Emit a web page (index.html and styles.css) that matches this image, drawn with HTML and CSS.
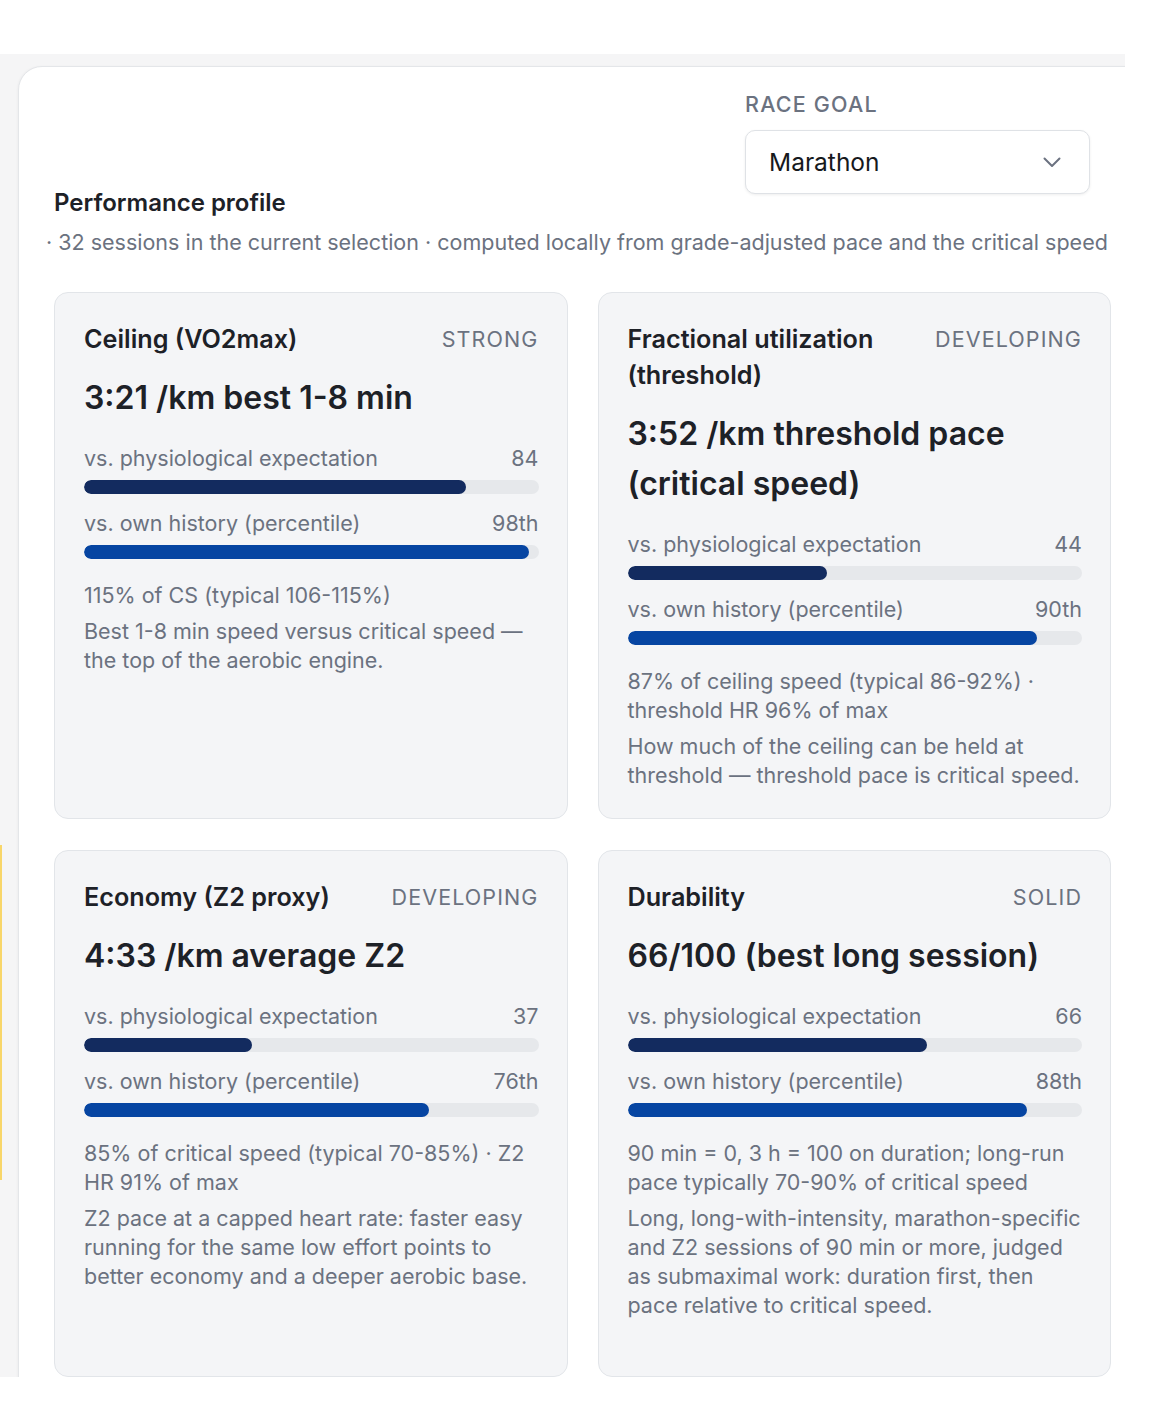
FILE: index.html
```html
<!DOCTYPE html>
<html lang="en">
<head>
<meta charset="utf-8">
<title>Performance profile</title>
<link rel="stylesheet" href="styles.css">
</head>
<body>
<div class="frame">
  <span class="edge-marker"></span>
  <section class="panel">
    <header class="head">
      <h2 class="title">Performance profile</h2>
      <div class="goal">
        <div class="goal-label">RACE GOAL</div>
        <div class="select">
          <span>Marathon</span>
          <svg class="chev" width="18" height="11" viewBox="0 0 18 11"><path d="M1.5 1.5 L9 9 L16.5 1.5" fill="none" stroke="#6b7280" stroke-width="2" stroke-linecap="round" stroke-linejoin="round"/></svg>
        </div>
      </div>
    </header>
    <p class="sub">· 32 sessions in the current selection · computed locally from grade-adjusted pace and the critical speed</p>

    <div class="grid">
      <article class="card">
        <div class="card-head">
          <h3 class="card-title">Ceiling (VO2max)</h3>
          <span class="badge">STRONG</span>
        </div>
        <div class="value">3:21 /km best 1-8 min</div>
        <div class="metrics">
          <div class="metric">
            <div class="metric-row"><span>vs. physiological expectation</span><span>84</span></div>
            <div class="track"><div class="fill fill-dark" style="width:84%"></div></div>
          </div>
          <div class="metric">
            <div class="metric-row"><span>vs. own history (percentile)</span><span>98th</span></div>
            <div class="track"><div class="fill fill-blue" style="width:98%"></div></div>
          </div>
        </div>
        <div class="notes">
          <p>115% of CS (typical 106-115%)</p>
          <p>Best 1-8 min speed versus critical speed — the top of the aerobic engine.</p>
        </div>
      </article>

      <article class="card">
        <div class="card-head">
          <h3 class="card-title">Fractional utilization (threshold)</h3>
          <span class="badge">DEVELOPING</span>
        </div>
        <div class="value">3:52 /km threshold pace (critical speed)</div>
        <div class="metrics">
          <div class="metric">
            <div class="metric-row"><span>vs. physiological expectation</span><span>44</span></div>
            <div class="track"><div class="fill fill-dark" style="width:44%"></div></div>
          </div>
          <div class="metric">
            <div class="metric-row"><span>vs. own history (percentile)</span><span>90th</span></div>
            <div class="track"><div class="fill fill-blue" style="width:90%"></div></div>
          </div>
        </div>
        <div class="notes">
          <p>87% of ceiling speed (typical 86-92%) · threshold HR 96% of max</p>
          <p>How much of the ceiling can be held at threshold — threshold pace is critical speed.</p>
        </div>
      </article>

      <article class="card">
        <div class="card-head">
          <h3 class="card-title">Economy (Z2 proxy)</h3>
          <span class="badge">DEVELOPING</span>
        </div>
        <div class="value">4:33 /km average Z2</div>
        <div class="metrics">
          <div class="metric">
            <div class="metric-row"><span>vs. physiological expectation</span><span>37</span></div>
            <div class="track"><div class="fill fill-dark" style="width:37%"></div></div>
          </div>
          <div class="metric">
            <div class="metric-row"><span>vs. own history (percentile)</span><span>76th</span></div>
            <div class="track"><div class="fill fill-blue" style="width:76%"></div></div>
          </div>
        </div>
        <div class="notes">
          <p>85% of critical speed (typical 70-85%) · Z2 HR 91% of max</p>
          <p>Z2 pace at a capped heart rate: faster easy running for the same low effort points to better economy and a deeper aerobic base.</p>
        </div>
      </article>

      <article class="card">
        <div class="card-head">
          <h3 class="card-title">Durability</h3>
          <span class="badge">SOLID</span>
        </div>
        <div class="value">66/100 (best long session)</div>
        <div class="metrics">
          <div class="metric">
            <div class="metric-row"><span>vs. physiological expectation</span><span>66</span></div>
            <div class="track"><div class="fill fill-dark" style="width:66%"></div></div>
          </div>
          <div class="metric">
            <div class="metric-row"><span>vs. own history (percentile)</span><span>88th</span></div>
            <div class="track"><div class="fill fill-blue" style="width:88%"></div></div>
          </div>
        </div>
        <div class="notes">
          <p>90 min = 0, 3 h = 100 on duration; long-run pace typically 70-90% of critical speed</p>
          <p>Long, long-with-intensity, marathon-specific and Z2 sessions of 90 min or more, judged as submaximal work: duration first, then pace relative to critical speed.</p>
        </div>
      </article>
    </div>
  </section>
</div>
</body>
</html>
```

FILE: styles.css
```css
* { box-sizing: border-box; }

html, body {
  margin: 0;
  padding: 0;
  background: #ffffff;
}

body {
  font-family: Inter, "Noto Sans", "Liberation Sans", sans-serif;
  color: #1d2127;
  font-size: 21.5px;
  line-height: 29px;
}

.frame {
  position: relative;
  margin-top: 54px;
  width: 1125px;
  height: 1323px;
  background: #f5f5f6;
  padding: 12px 0 0 18px;
  overflow: hidden;
}

.edge-marker {
  position: absolute;
  left: 0;
  top: 791px;
  width: 2px;
  height: 335px;
  background: #f8d66a;
}

.panel {
  width: 1129px;
  height: 1400px;
  background: #ffffff;
  border: 1px solid #e4e6e9;
  border-top-left-radius: 24px;
  padding: 23px 35px 0 35px;
  box-shadow: -1px 0 2px rgba(0, 0, 0, 0.03);
}

.head {
  display: flex;
  justify-content: space-between;
  align-items: flex-end;
}

.title {
  margin: 0;
  font-size: 24px;
  line-height: 36px;
  font-weight: 600;
  color: #1d2127;
}

.goal {
  display: flex;
  flex-direction: column;
  gap: 11px;
  margin-right: 21px;
  margin-bottom: 27px;
}

.goal-label {
  font-size: 21.5px;
  line-height: 29px;
  font-weight: 500;
  letter-spacing: 1.2px;
  color: #6b7280;
}

.select {
  width: 345px;
  height: 64px;
  border: 1px solid #dfe2e6;
  border-radius: 10px;
  background: #ffffff;
  box-shadow: 0 1px 3px rgba(0, 0, 0, 0.07);
  display: flex;
  align-items: center;
  justify-content: space-between;
  padding: 0 28px 0 23px;
  font-size: 24.5px;
  color: #16191d;
}

.chev { display: block; }

.sub {
  margin: 7px 0 0 -8px;
  font-size: 21.5px;
  line-height: 29px;
  color: #6b7280;
  white-space: nowrap;
}

.grid {
  margin-top: 35px;
  width: 1057px;
  display: grid;
  grid-template-columns: 1fr 1fr;
  grid-auto-rows: 1fr;
  column-gap: 30px;
  row-gap: 31px;
}

.card {
  background: #f4f5f7;
  border: 1px solid #e2e5e9;
  border-radius: 14px;
  padding: 28px 28px 28px 29px;
}

.card-head {
  display: flex;
  justify-content: space-between;
  align-items: flex-start;
  gap: 24px;
}

.card-title {
  margin: 0;
  font-size: 25.2px;
  line-height: 36px;
  font-weight: 600;
  color: #1d2127;
}

.badge {
  font-size: 21.5px;
  line-height: 36px;
  letter-spacing: 1.1px;
  color: #6b7280;
  white-space: nowrap;
}

.value {
  margin-top: 16px;
  font-size: 32px;
  line-height: 50px;
  font-weight: 600;
  color: #1d2127;
}

.metrics {
  margin-top: 21px;
  display: flex;
  flex-direction: column;
  gap: 15px;
}

.metric {
  display: flex;
  flex-direction: column;
  gap: 7px;
}

.metric-row {
  display: flex;
  justify-content: space-between;
  color: #6b7280;
}

.track {
  height: 14px;
  border-radius: 7px;
  background: #e6e8eb;
  overflow: hidden;
}

.fill {
  height: 100%;
  border-radius: 7px;
}

.fill-dark { background: #132b5f; }
.fill-blue { background: #0645a2; }

.notes {
  margin-top: 22px;
  display: flex;
  flex-direction: column;
  gap: 7px;
  color: #6b7280;
}

.notes p { margin: 0; }
```
